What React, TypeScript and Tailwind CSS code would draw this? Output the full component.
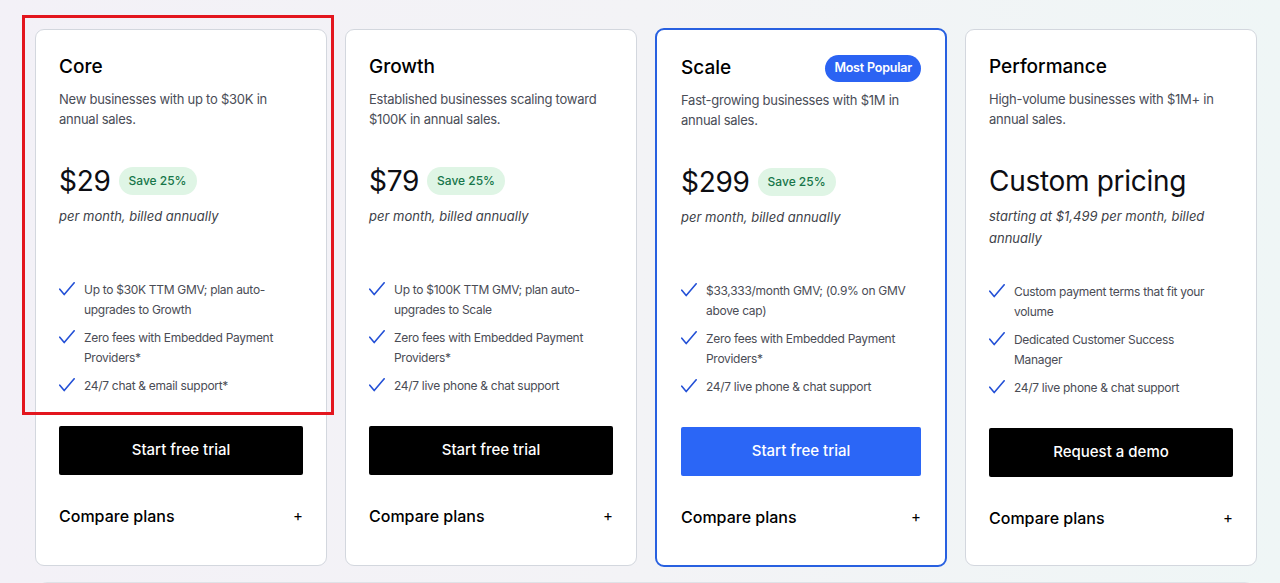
type Plan = {
  name: string;
  blurb: string;
  price: string;
  save?: boolean;
  note: string;
  features: string[];
  cta: string;
  popular?: boolean;
};

const plans: Plan[] = [
  {
    name: "Core",
    blurb: "New businesses with up to $30K in annual sales.",
    price: "$29",
    save: true,
    note: "per month, billed annually",
    features: [
      "Up to $30K TTM GMV; plan auto-upgrades to Growth",
      "Zero fees with Embedded Payment Providers*",
      "24/7 chat & email support*",
    ],
    cta: "Start free trial",
  },
  {
    name: "Growth",
    blurb: "Established businesses scaling toward $100K in annual sales.",
    price: "$79",
    save: true,
    note: "per month, billed annually",
    features: [
      "Up to $100K TTM GMV; plan auto-upgrades to Scale",
      "Zero fees with Embedded Payment Providers*",
      "24/7 live phone & chat support",
    ],
    cta: "Start free trial",
  },
  {
    name: "Scale",
    blurb: "Fast-growing businesses with $1M in annual sales.",
    price: "$299",
    save: true,
    note: "per month, billed annually",
    features: [
      "$33,333/month GMV; (0.9% on GMV above cap)",
      "Zero fees with Embedded Payment Providers*",
      "24/7 live phone & chat support",
    ],
    cta: "Start free trial",
    popular: true,
  },
  {
    name: "Performance",
    blurb: "High-volume businesses with $1M+ in annual sales.",
    price: "Custom pricing",
    note: "starting at $1,499 per month, billed annually",
    features: [
      "Custom payment terms that fit your volume",
      "Dedicated Customer Success Manager",
      "24/7 live phone & chat support",
    ],
    cta: "Request a demo",
  },
];

const Tick = () => (
  <svg viewBox="0 0 16 14" className="mt-[2px] h-[14px] w-[16px] shrink-0 text-[#2350d6]" fill="none">
    <path d="M0.8 7.2 L5.2 12.6 L15.2 0.8" stroke="currentColor" strokeWidth="1.6" strokeLinecap="round" strokeLinejoin="round" />
  </svg>
);

const PlanCard = ({ plan }: { plan: Plan }) => {
  return (
    <div
      className={
        plan.popular
          ? "-my-px flex flex-col rounded-[9px] border-2 border-[#2860e0] bg-white px-[24px] pt-[24px] pb-[35px]"
          : "flex flex-col rounded-[9px] border border-[#d3d7de] bg-white px-[23px] pt-[23px] pb-[35px]"
      }
    >
      <div className="flex h-[28px] items-center justify-between">
        <h3 className="text-[19px] font-medium text-black">{plan.name}</h3>
        {plan.popular && (
          <span className="flex h-[27px] items-center rounded-full bg-[#2b63f3] px-[9px] text-[12.5px] font-semibold tracking-[-0.2px] text-white">
            Most Popular
          </span>
        )}
      </div>
      <p className="mt-[8px] text-[13px] leading-[20px] tracking-[-0.25px] text-[#4a4d57]">{plan.blurb}</p>

      <div className="mt-[34px] min-h-[84px]">
        <div className="flex h-[36px] items-center gap-[8px]">
          <span className="text-[28px] leading-[36px] tracking-[-0.3px] text-[#0d0d12]">{plan.price}</span>
          {plan.save && (
            <span className="flex h-[28px] items-center rounded-full bg-[#dff5e5] px-[10px] text-[12px] font-medium text-[#17764a]">
              Save 25%
            </span>
          )}
        </div>
        <p className="mt-[6px] text-[13px] italic leading-[22px] text-[#3d3f48]">{plan.note}</p>
      </div>

      <ul className="mt-[33px] flex flex-col gap-[8px]">
        {plan.features.map((f) => (
          <li key={f} className="flex items-start gap-[9px]">
            <Tick />
            <span className="pr-[12px] text-[12px] leading-[20px] tracking-[-0.3px] text-[#4a4c55]">{f}</span>
          </li>
        ))}
      </ul>

      <button
        className={
          plan.popular
            ? "mt-[30px] h-[49px] w-full rounded-[2px] bg-[#2b66f6] text-[15px] font-medium text-white"
            : "mt-[30px] h-[49px] w-full rounded-[2px] bg-black text-[15px] font-medium text-white"
        }
      >
        {plan.cta}
      </button>

      <div className="mt-[29px] flex h-[24px] items-center justify-between">
        <span className="text-[16px] font-medium text-black">Compare plans</span>
        <span className="text-[15px] text-black">+</span>
      </div>
    </div>
  );
};

export default function App() {
  return (
    <div
      className="relative h-[583px] w-[1280px] overflow-hidden bg-gradient-to-r from-[#f3f1f7] via-[#f3f3f6] to-[#eff6f6] pt-[29px]"
      style={{ fontFamily: "Inter, 'Noto Sans', sans-serif" }}
    >
      <div className="ml-[35px] grid w-[1222px] grid-cols-4 gap-[18px]">
        {plans.map((p) => (
          <PlanCard key={p.name} plan={p} />
        ))}
      </div>

      <div className="mt-[16px] ml-[38px] h-[40px] w-[1216px] rounded-[9px] border border-[#dfe2e7] bg-white" />

      {/* annotation box */}
      <div className="pointer-events-none absolute top-[15px] left-[22px] h-[400px] w-[312px] border-[3px] border-[#e3161e]" />
    </div>
  );
}
